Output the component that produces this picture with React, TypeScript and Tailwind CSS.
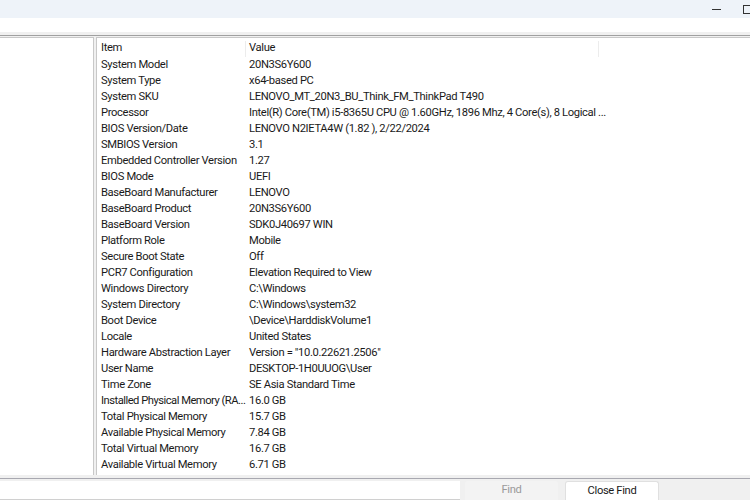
import React from "react";

const rows: [string, string][] = [
  ["System Model", "20N3S6Y600"],
  ["System Type", "x64-based PC"],
  ["System SKU", "LENOVO_MT_20N3_BU_Think_FM_ThinkPad T490"],
  ["Processor", "Intel(R) Core(TM) i5-8365U CPU @ 1.60GHz, 1896 Mhz, 4 Core(s), 8 Logical ..."],
  ["BIOS Version/Date", "LENOVO N2IETA4W (1.82 ), 2/22/2024"],
  ["SMBIOS Version", "3.1"],
  ["Embedded Controller Version", "1.27"],
  ["BIOS Mode", "UEFI"],
  ["BaseBoard Manufacturer", "LENOVO"],
  ["BaseBoard Product", "20N3S6Y600"],
  ["BaseBoard Version", "SDK0J40697 WIN"],
  ["Platform Role", "Mobile"],
  ["Secure Boot State", "Off"],
  ["PCR7 Configuration", "Elevation Required to View"],
  ["Windows Directory", "C:\\Windows"],
  ["System Directory", "C:\\Windows\\system32"],
  ["Boot Device", "\\Device\\HarddiskVolume1"],
  ["Locale", "United States"],
  ["Hardware Abstraction Layer", "Version = \"10.0.22621.2506\""],
  ["User Name", "DESKTOP-1H0UUOG\\User"],
  ["Time Zone", "SE Asia Standard Time"],
  ["Installed Physical Memory (RA...", "16.0 GB"],
  ["Total Physical Memory", "15.7 GB"],
  ["Available Physical Memory", "7.84 GB"],
  ["Total Virtual Memory", "16.7 GB"],
  ["Available Virtual Memory", "6.71 GB"],
];

export default function App() {
  return (
    <div
      className="w-[750px] h-[500px] overflow-hidden bg-[#f0f0f0] flex flex-col text-[11.2px] tracking-[-0.35px] text-[#1a1a1a]"
      style={{ fontFamily: 'Roboto, "Liberation Sans", sans-serif' }}
    >
      {/* title bar */}
      <div className="h-[18px] bg-[#eef3f9] flex items-center justify-end shrink-0">
        <div className="w-[9px] h-px bg-[#333] mr-[22px]" />
        <div className="w-[9px] h-[9px] border border-[#333] -mr-[2px]" />
      </div>
      {/* menu strip */}
      <div className="h-[14px] bg-white shrink-0" />
      <div className="h-[4px] bg-[#f0f0f0] border-b border-[#a0a0a0] shrink-0" />

      {/* panes */}
      <div className="flex flex-1 min-h-0 pt-px gap-[2px]">
        <div className="w-[94px] bg-white border-r border-t border-[#c8c8c8] shrink-0" />
        <div className="flex-1 bg-white border-l border-t border-[#c8c8c8] pl-[4px] pt-[2px] overflow-hidden">
          <div className="flex h-[17px] items-center">
            <div className="w-[144px] shrink-0">Item</div>
            <div className="w-px h-[16px] bg-[#ececec]" />
            <div className="w-[352px] shrink-0 pl-[3px]">Value</div>
            <div className="w-px h-[16px] bg-[#ececec]" />
          </div>
          {rows.map(([k, v]) => (
            <div key={k} className="flex h-[16px] items-center whitespace-nowrap">
              <div
                className={
                  k.length > 28 ? "w-[144px] shrink-0 tracking-[-0.5px]" : "w-[144px] shrink-0"
                }
              >
                {k}
              </div>
              <div className="pl-[4px]">{v}</div>
            </div>
          ))}
        </div>
      </div>

      {/* find bar */}
      <div className="h-[4px] shrink-0 border-b border-[#a8a8b0]" />
      <div className="h-[21px] shrink-0 flex items-stretch pt-[2px]">
        <div className="w-[460px] bg-white border-b border-[#d0d0d0]" />
        <div className="ml-[5px] w-[93px] bg-[#f3f3f3] rounded-t-[3px] flex items-center justify-center text-[#9a9a9a]">
          Find
        </div>
        <div className="ml-[7px] w-[94px] bg-white border border-b-0 border-[#e0e0e0] rounded-t-[3px] flex items-center justify-center">
          Close Find
        </div>
      </div>
    </div>
  );
}
